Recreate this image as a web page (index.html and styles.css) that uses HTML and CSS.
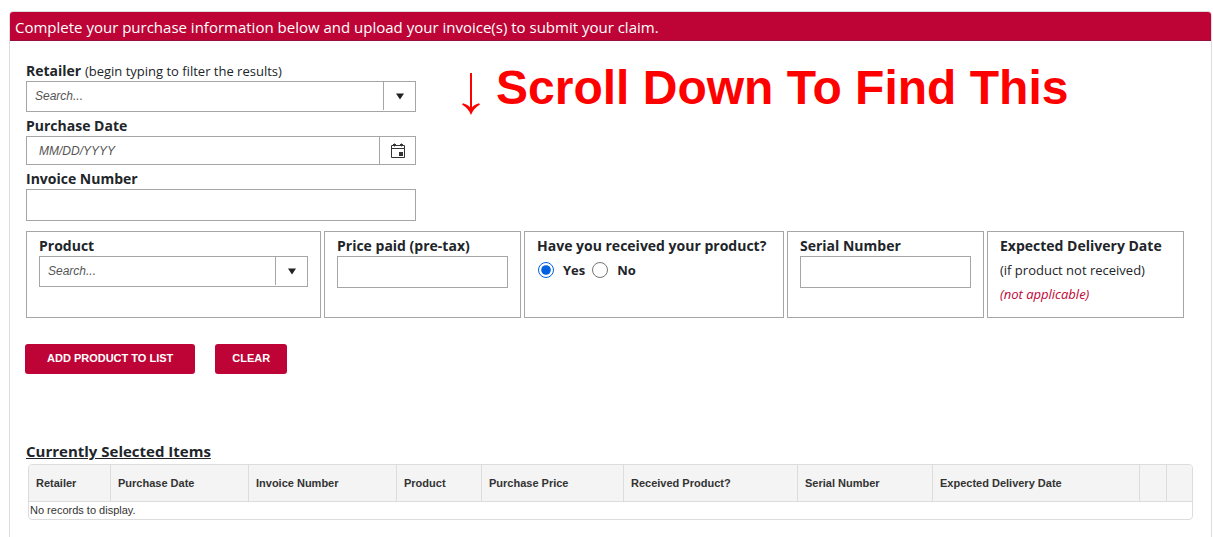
FILE: index.html
```html
<!DOCTYPE html>
<html lang="en">
<head>
    <meta charset="utf-8">
    <title>Submit Your Claim</title>
    <link rel="stylesheet" href="styles.css">
</head>
<body>
    <div class="panel">
        <div class="panel-heading">Complete your purchase information below and upload your invoice(s) to submit your claim.</div>
        <form class="panel-body">
            <div class="top">
                <div class="fields">
                    <div class="field-label"><label for="retailer">Retailer</label> <span class="hint">(begin typing to filter the results)</span></div>
                    <div class="combo">
                        <input type="text" id="retailer" placeholder="Search...">
                        <button type="button" aria-label="Show retailers"><svg width="8" height="7" viewBox="0 0 8 7"><path d="M0 0.5h8L4 6.5z" fill="#222"/></svg></button>
                    </div>
                    <div class="field-label"><label for="purchaseDate">Purchase Date</label></div>
                    <div class="combo date">
                        <input type="text" id="purchaseDate" placeholder="MM/DD/YYYY">
                        <button type="button" aria-label="Open calendar">
                            <svg width="16" height="16" viewBox="0 0 16 16">
                                <path d="M1.5 2.5h13v12h-13zM1 5.500h14M4.500 0.500v3M11.500 0.500v3" fill="none" stroke="#333"/>
                                <path d="M3 1h3v2H3zM10 1h3v2h-3zM9 9h4v4H9z" fill="#333"/>
                            </svg>
                        </button>
                    </div>
                    <div class="field-label"><label for="invoice">Invoice Number</label></div>
                    <input type="text" class="textbox" id="invoice">
                </div>
                <div class="notice">
                    <svg width="18" height="42" viewBox="0 0 18 42">
                        <path d="M8 0h2v37H8z" fill="#f00"/>
                        <path d="M0 31.500l1-1.200C5 31.500 7 33 9 35.500c2-2.500 4-4 8-5.200l1 1.200C14 34 11 37 9 42 7 37 4 34 0 31.500z" fill="#f00"/>
                    </svg>
                    <span>Scroll Down To Find This</span>
                </div>
            </div>

            <div class="product-row">
                <div class="cell">
                    <div class="field-label"><label for="product">Product</label></div>
                    <div class="combo">
                        <input type="text" id="product" placeholder="Search...">
                        <button type="button" aria-label="Show products"><svg width="8" height="7" viewBox="0 0 8 7"><path d="M0 0.5h8L4 6.5z" fill="#222"/></svg></button>
                    </div>
                </div>
                <div class="cell">
                    <div class="field-label"><label for="price">Price paid (pre-tax)</label></div>
                    <input type="text" class="textbox" id="price">
                </div>
                <div class="cell">
                    <div class="field-label">Have you received your product?</div>
                    <div class="radios">
                        <input type="radio" name="received" id="receivedYes" checked>
                        <label for="receivedYes">Yes</label>
                        <input type="radio" name="received" id="receivedNo">
                        <label for="receivedNo">No</label>
                    </div>
                </div>
                <div class="cell">
                    <div class="field-label"><label for="serial">Serial Number</label></div>
                    <input type="text" class="textbox" id="serial">
                </div>
                <div class="cell">
                    <div class="field-label">Expected Delivery Date</div>
                    <div class="note">(if product not received)</div>
                    <div class="note na">(not applicable)</div>
                </div>
            </div>

            <div class="buttons">
                <button type="button" class="btn btn-add">ADD PRODUCT TO LIST</button>
                <button type="reset" class="btn">CLEAR</button>
            </div>

            <h2>Currently Selected Items</h2>
            <div class="grid">
                <table>
                    <colgroup>
                        <col class="c-retailer">
                        <col class="c-date">
                        <col class="c-invoice">
                        <col class="c-product">
                        <col class="c-price">
                        <col class="c-received">
                        <col class="c-serial">
                        <col class="c-delivery">
                        <col class="c-action">
                        <col class="c-action">
                    </colgroup>
                    <thead>
                        <tr>
                            <th>Retailer</th>
                            <th>Purchase Date</th>
                            <th>Invoice Number</th>
                            <th>Product</th>
                            <th>Purchase Price</th>
                            <th>Received Product?</th>
                            <th>Serial Number</th>
                            <th>Expected Delivery Date</th>
                            <th></th>
                            <th></th>
                        </tr>
                    </thead>
                    <tbody>
                        <tr>
                            <td colspan="10">No records to display.</td>
                        </tr>
                    </tbody>
                </table>
            </div>
        </form>
    </div>
</body>
</html>
```
FILE: styles.css
```css
* {
    box-sizing: border-box;
}
body {
    margin: 0;
    padding: 11px 1px 0 9px;
    font-family: "Segoe UI", "Open Sans", sans-serif;
    font-size: 14px;
    color: #212529;
    background: #fff;
}
.panel {
    border: 1px solid #ddd;
    border-radius: 4px;
}
.panel-heading {
    height: 29px;
    padding-left: 5px;
    line-height: 30px;
    font-size: 15px;
    color: #fff;
    background: #be0436;
    border-bottom: 1px solid #96103a;
    border-radius: 3px 3px 0 0;
    white-space: nowrap;
}
.panel-body {
    padding: 16px 17px 30px 16px;
}
.top {
    display: flex;
    gap: 46px;
}
.fields {
    width: 390px;
}
.field-label {
    height: 24px;
    line-height: 28px;
    font-size: 14px;
    font-weight: bold;
    white-space: nowrap;
}
.hint {
    font-size: 13px;
    font-weight: normal;
}
.combo {
    display: flex;
    height: 31px;
    border: 1px solid #a6a6a6;
}
.combo.date {
    height: 29px;
}
.combo input {
    flex: 1;
    min-width: 0;
    padding: 0 8px 1px;
    border: 0;
    font: 12px "Liberation Sans", Arial, sans-serif;
    background: none;
}
.combo.date input {
    padding: 0 12px;
}
.combo input::placeholder {
    font-style: italic;
    color: #555;
}
.combo button {
    display: flex;
    align-items: center;
    justify-content: center;
    width: 32px;
    margin-bottom: 1px;
    padding: 0;
    border: 0;
    border-left: 1px solid #a6a6a6;
    background: none;
}
.combo.date button {
    width: 36px;
    margin-bottom: 0;
}
.textbox {
    display: block;
    width: 100%;
    height: 32px;
    padding: 0 8px;
    border: 1px solid #a6a6a6;
    font: 12px "Liberation Sans", Arial, sans-serif;
}
.notice {
    display: flex;
    align-items: flex-start;
    gap: 16px;
    padding-top: 3px;
    font: bold 48px/56px "Liberation Sans", Arial, sans-serif;
    color: #f00;
    white-space: nowrap;
}
.notice svg {
    margin-top: 13px;
}
.product-row {
    display: grid;
    grid-template-columns: 295fr 197fr 260fr 197fr 197fr;
    gap: 3px;
    margin: 10px 10px 0 0;
}
.cell {
    min-width: 0;
    height: 87px;
    padding: 0 12px;
    border: 1px solid #a6a6a6;
}
.radios {
    display: flex;
    align-items: center;
    height: 28px;
    font-size: 13px;
    font-weight: bold;
}
.radios input {
    width: 16px;
    height: 16px;
    margin: 0 9px 0 1px;
    accent-color: #0060df;
}
.radios label {
    margin-right: 6px;
}
.note {
    height: 24px;
    line-height: 28px;
    font-size: 13px;
    white-space: nowrap;
}
.note.na {
    font-style: italic;
    color: #be0436;
}
.buttons {
    display: flex;
    gap: 20px;
    margin: 26px 0 0 -1px;
}
.btn {
    height: 30px;
    padding: 0 17px 2px;
    border: 0;
    border-radius: 3px;
    font: bold 11px "Liberation Sans", Arial, sans-serif;
    color: #fff;
    background: #be0436;
}
.btn-add {
    padding: 0 22px 2px;
}
h2 {
    margin: 65px 0 0;
    height: 25px;
    line-height: 24px;
    font-size: 15px;
    text-decoration: underline;
}
.grid {
    margin: 0 1px 0 2px;
    border: 1px solid #dcdcdc;
    border-radius: 4px;
    overflow: hidden;
}
table {
    width: 100%;
    table-layout: fixed;
    border-collapse: separate;
    border-spacing: 0;
    font: 11px "Liberation Sans", Arial, sans-serif;
    color: #333;
}
th {
    height: 37px;
    padding: 0 7px;
    text-align: left;
    white-space: nowrap;
    background: #f4f4f4;
    border-bottom: 1px solid #dcdcdc;
}
th + th {
    border-left: 1px solid #dcdcdc;
}
td {
    height: 17px;
    padding: 0 1px 1px;
}
.c-retailer { width: 81px; }
.c-date { width: 138px; }
.c-invoice { width: 148px; }
.c-product { width: 85px; }
.c-price { width: 142px; }
.c-received { width: 174px; }
.c-serial { width: 135px; }
.c-delivery { width: 207px; }
.c-action { width: 27px; }
```
